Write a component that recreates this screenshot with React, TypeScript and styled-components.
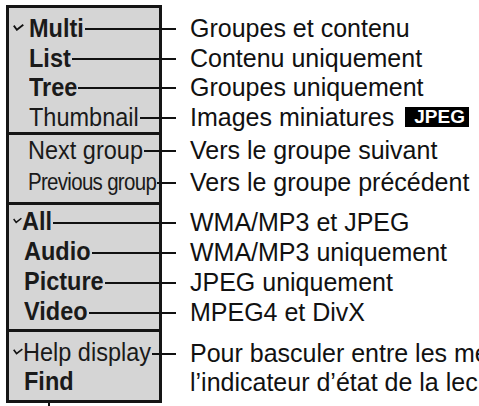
import React from 'react'
import styled, { createGlobalStyle } from 'styled-components'

const GlobalStyle = createGlobalStyle`
  html, body {
    margin: 0;
    padding: 0;
    background: #fff;
    overflow: hidden;
  }
  body {
    font-family: "Liberation Sans", Arial, sans-serif;
    color: #111;
  }
`;

const Diagram = styled.div`
  display: flex;
  flex-direction: column;
  padding: 5px 0 0 6px;
`;

const Section = styled.div`
  display: flex;
  align-items: flex-start;
`;

const Panel = styled.div<{ $border: number; $padTop: number; $padBottom: number; $last?: boolean }>`
  flex-shrink: 0;
  box-sizing: border-box;
  width: 156px;
  background: #d5d5d5;
  border: 3px solid #151515;
  border-top-width: ${p => p.$border}px;
  border-bottom-width: ${p => (p.$last ? 3 : 0)}px;
  padding: ${p => p.$padTop}px 0 ${p => p.$padBottom}px 4px;
`;

const Row = styled.div<{ $h: number }>`
  display: flex;
  align-items: center;
  height: ${p => p.$h}px;
`;

const Gutter = styled.div<{ $w: number }>`
  flex-shrink: 0;
  display: flex;
  align-items: center;
  width: ${p => p.$w}px;

  svg {
    margin-bottom: 3px;
  }
`;

// the printed face is a little taller than Arial for the same width
const Label = styled.span<{ $bold?: boolean; $size?: number; $spacing?: number; $stretch?: number }>`
  display: inline-block;
  font-size: ${p => p.$size ?? 23.5}px;
  font-weight: ${p => (p.$bold ? 700 : 400)};
  letter-spacing: ${p => p.$spacing ?? 0}px;
  line-height: 1;
  white-space: nowrap;
  color: #1a1a1a;
  transform: scaleY(${p => p.$stretch ?? 1.09});
`;

const Leader = styled.span`
  flex: 1;
  height: 2px;
  margin: 1px -17px 0 1px;
  background: #111;
`;

const Notes = styled.div<{ $top: number }>`
  display: flex;
  flex-direction: column;
  margin-left: 28px;
  padding-top: ${p => p.$top}px;
  white-space: nowrap;
`;

const NoteRow = styled.div<{ $h: number }>`
  display: flex;
  align-items: center;
  height: ${p => p.$h}px;
  font-size: 25px;
  line-height: 1;
  color: #111;
`;

const Badge = styled.span`
  display: inline-block;
  margin-left: 11px;
  padding: 0 4px 0 9px;
  background: #000;
  color: #fff;
  font-size: 19px;
  font-weight: 700;
  line-height: 20px;
`;

const Stem = styled.div`
  width: 2px;
  height: 8px;
  margin-left: 42px;
  background: #111;
`;

interface EntryDef {
    label: string;
    bold?: boolean;
    size?: number;
    spacing?: number;
    stretch?: number;
    indent: number;
    checked?: boolean;
    leader?: boolean;
    note?: React.ReactNode;
}

interface SectionDef {
    border: number;
    padTop: number;
    padBottom: number;
    row: number;
    last?: boolean;
    entries: EntryDef[];
}

const sections: SectionDef[] = [
    {
        border: 3, padTop: 6, padBottom: 0, row: 29.5,
        entries: [
            { label: 'Multi', bold: true, indent: 20, checked: true, note: 'Groupes et contenu' },
            { label: 'List', bold: true, indent: 20, note: 'Contenu uniquement' },
            { label: 'Tree', bold: true, indent: 20, note: 'Groupes uniquement' },
            { label: 'Thumbnail', indent: 20, note: <>Images miniatures<Badge>JPEG</Badge></> },
        ],
    },
    {
        border: 3, padTop: 0, padBottom: 4, row: 31.5,
        entries: [
            { label: 'Next group', indent: 19, note: 'Vers le groupe suivant' },
            { label: 'Previous group', size: 20.5, spacing: -0.7, stretch: 1.16, indent: 19, note: 'Vers le groupe précédent' },
        ],
    },
    {
        border: 3, padTop: 2, padBottom: 2, row: 30,
        entries: [
            { label: 'All', bold: true, indent: 13, checked: true, note: 'WMA/MP3 et JPEG' },
            { label: 'Audio', bold: true, indent: 15, note: 'WMA/MP3 uniquement' },
            { label: 'Picture', bold: true, indent: 15, note: 'JPEG uniquement' },
            { label: 'Video', bold: true, indent: 15, note: 'MPEG4 et DivX' },
        ],
    },
    {
        border: 3, padTop: 6.5, padBottom: 3.5, row: 29, last: true,
        entries: [
            { label: 'Help display', indent: 14, checked: true, note: 'Pour basculer entre les me' },
            { label: 'Find', bold: true, indent: 15, leader: false, note: 'l’indicateur d’état de la lec' },
        ],
    },
];

function Check() {
    return (
        <svg width="11" height="7" viewBox="0 0 11 7">
            <polyline points="0.8,1.6 3.9,5.8 10.3,0.8" fill="none" stroke="#111" strokeWidth="1.8" />
        </svg>
    )
}

function App() {
    return (
        <>
            <GlobalStyle />
            <Diagram>
                {sections.map((s, i) => (
                    <Section key={i}>
                        <Panel $border={s.border} $padTop={s.padTop} $padBottom={s.padBottom} $last={s.last}>
                            {s.entries.map((e) => (
                                <Row key={e.label} $h={s.row}>
                                    <Gutter $w={e.indent - 4}>{e.checked && <Check />}</Gutter>
                                    <Label $bold={e.bold} $size={e.size} $spacing={e.spacing} $stretch={e.stretch}>{e.label}</Label>
                                    {e.leader !== false && <Leader />}
                                </Row>
                            ))}
                        </Panel>
                        <Notes $top={s.border + s.padTop}>
                            {s.entries.map((e) => (
                                <NoteRow key={e.label} $h={s.row}>{e.note}</NoteRow>
                            ))}
                        </Notes>
                    </Section>
                ))}
                <Stem />
            </Diagram>
        </>
    )
}

export default App
